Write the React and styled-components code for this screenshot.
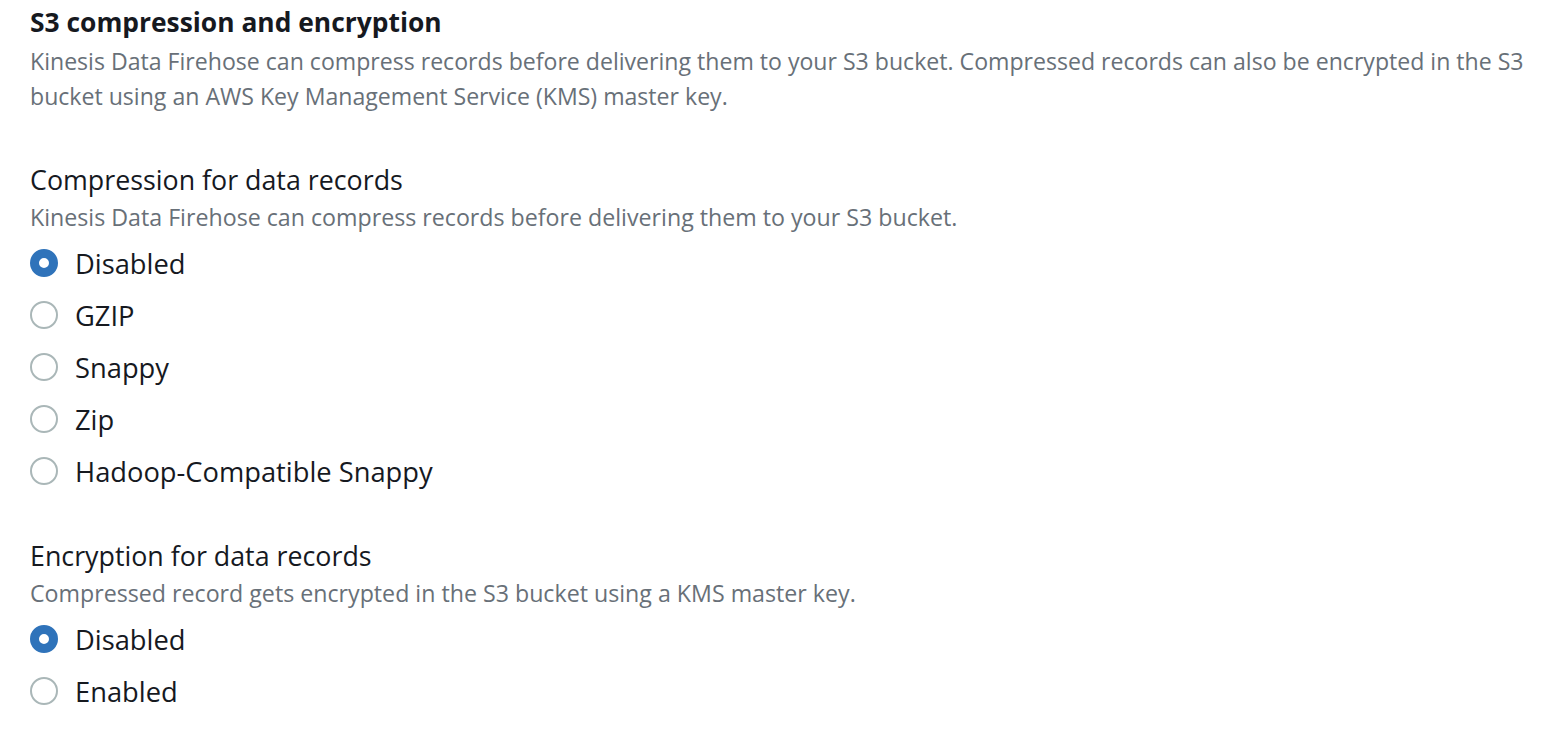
import React, { useState } from "react";
import styled, { createGlobalStyle } from "styled-components";

const GlobalStyle = createGlobalStyle`
  html, body {
    margin: 0;
    padding: 0;
    background: #ffffff;
  }
  body {
    font-family: "Open Sans", "Noto Sans", Arial, sans-serif;
    color: #16191f;
    -webkit-font-smoothing: antialiased;
  }
`;

const compressionOptions = ["Disabled", "GZIP", "Snappy", "Zip", "Hadoop-Compatible Snappy"];
const encryptionOptions = ["Disabled", "Enabled"];

export default function App() {
  const [compression, setCompression] = useState("Disabled");
  const [encryption, setEncryption] = useState("Disabled");
  return (
    <>
      <GlobalStyle />
      <Page>
        <Header>
          <Title>S3 compression and encryption</Title>
          <Description>
            Kinesis Data Firehose can compress records before delivering them to your S3 bucket. Compressed
            records can also be encrypted in the S3 bucket using an AWS Key Management Service (KMS) master key.
          </Description>
        </Header>

        <Field>
          <Label>Compression for data records</Label>
          <Hint>Kinesis Data Firehose can compress records before delivering them to your S3 bucket.</Hint>
          <RadioGroup>
            {compressionOptions.map(opt => (
              <RadioRow key={opt} onClick={() => setCompression(opt)}>
                <RadioCircle checked={compression === opt} />
                <RadioText>{opt}</RadioText>
              </RadioRow>
            ))}
          </RadioGroup>
        </Field>

        <Field>
          <Label>Encryption for data records</Label>
          <Hint>Compressed record gets encrypted in the S3 bucket using a KMS master key.</Hint>
          <RadioGroup>
            {encryptionOptions.map(opt => (
              <RadioRow key={opt} onClick={() => setEncryption(opt)}>
                <RadioCircle checked={encryption === opt} />
                <RadioText>{opt}</RadioText>
              </RadioRow>
            ))}
          </RadioGroup>
        </Field>
      </Page>
    </>
  );
}

const Page = styled.div`
  padding: 4px 8px 0 30px;
  display: flex;
  flex-direction: column;
`;

const Header = styled.div`
  display: flex;
  flex-direction: column;
  gap: 4px;
  margin-bottom: 47px;
`;

const Title = styled.h2`
  margin: 0;
  font-size: 26.4px;
  line-height: 36px;
  font-weight: 700;
  color: #16191f;
`;

const Description = styled.p`
  margin: 0;
  font-size: 23.1px;
  line-height: 35px;
  color: #687078;
`;

const Field = styled.div`
  display: flex;
  flex-direction: column;

  & + & {
    margin-top: 40px;
  }
`;

const Label = styled.div`
  font-size: 26.8px;
  line-height: 38px;
  color: #16191f;
`;

const Hint = styled.div`
  font-size: 23.2px;
  line-height: 36px;
  color: #687078;
`;

const RadioGroup = styled.div`
  display: flex;
  flex-direction: column;
  margin-top: 2px;
`;

const RadioRow = styled.label`
  display: flex;
  align-items: center;
  gap: 17px;
  height: 52px;
  cursor: pointer;
`;

const RadioCircle = styled.span`
  box-sizing: border-box;
  width: 28px;
  height: 28px;
  border-radius: 50%;
  flex: none;
  background: #ffffff;
  border: ${p => (p.checked ? "9px solid #2f73ba" : "2px solid #aab7b8")};
`;

const RadioText = styled.span`
  font-size: 27.3px;
  color: #16191f;
`;
